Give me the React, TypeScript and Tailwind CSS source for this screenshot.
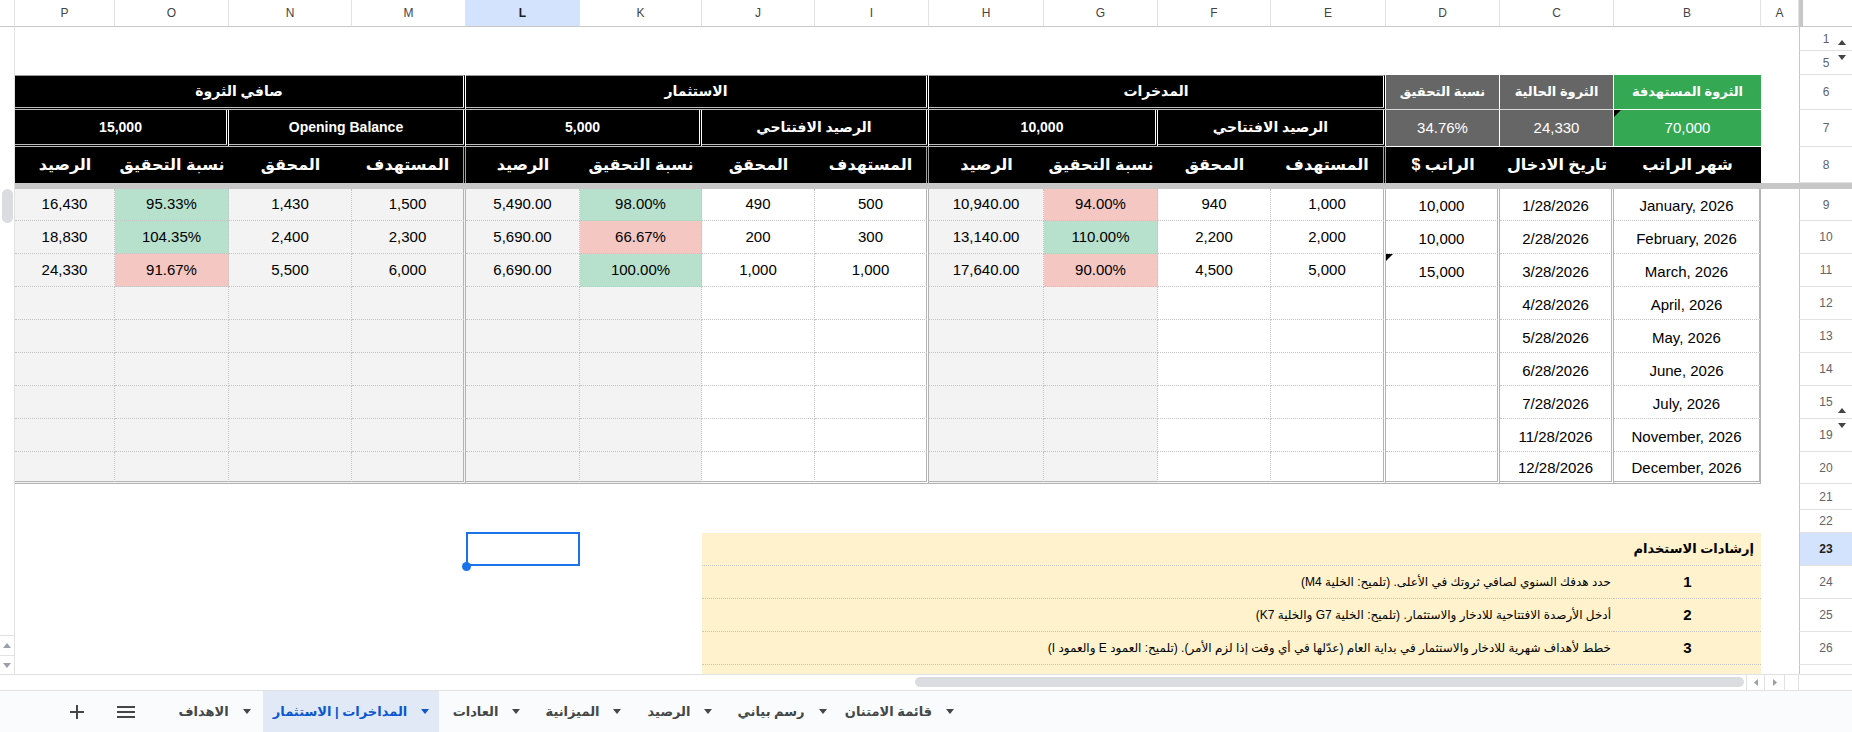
import React from "react";

const COLS =
  "grid grid-cols-[100px_114px_123px_114px_114px_122px_113px_114px_115px_114px_113px_115px_114px_114px_147px_38px_53px]";
const FONT = "[font-family:'Liberation_Sans','DejaVu_Sans',sans-serif]";

const GRAY = "bg-[#f3f3f3]";
const WHITE = "bg-white";
const GREEN = "bg-[#b7e1cd]";
const RED = "bg-[#f4c7c3]";

const dotR = "border-r border-r-[#c4c4c4] [border-right-style:dotted]";
const dblR = "border-r-[3px] border-r-[#b3b3b3] [border-right-style:double]";
const solR = "border-r-2 border-r-[#b3b3b3]";
const dotB = "border-b border-b-[#c4c4c4] [border-bottom-style:dotted]";
const dblB = "border-b-[3px] border-b-[#b3b3b3] [border-bottom-style:double]";

const LETTERS = ["P", "O", "N", "M", "L", "K", "J", "I", "H", "G", "F", "E", "D", "C", "B", "A"];

// P..B in the order they appear on screen
const dataCols = [
  { bg: GRAY, r: dotR },
  { bg: GRAY, r: dotR },
  { bg: GRAY, r: dotR },
  { bg: GRAY, r: dblR },
  { bg: GRAY, r: dotR },
  { bg: GRAY, r: dotR },
  { bg: WHITE, r: dotR },
  { bg: WHITE, r: dblR },
  { bg: GRAY, r: dotR },
  { bg: GRAY, r: dotR },
  { bg: WHITE, r: dotR },
  { bg: WHITE, r: dblR },
  { bg: WHITE, r: dblR },
  { bg: WHITE, r: dblR },
  { bg: WHITE, r: solR },
];

type DataRow = {
  n: string;
  h: string;
  v: string[];
  tint?: Record<number, string>;
  note?: boolean;
  mark?: "up" | "down";
  last?: boolean;
};

const empty = (c: string, b: string) => ["", "", "", "", "", "", "", "", "", "", "", "", "", c, b];

const rows: DataRow[] = [
  {
    n: "9",
    h: "h-[32px]",
    v: ["16,430", "95.33%", "1,430", "1,500", "5,490.00", "98.00%", "490", "500", "10,940.00", "94.00%", "940", "1,000", "10,000", "1/28/2026", "January, 2026"],
    tint: { 1: GREEN, 5: GREEN, 9: RED },
  },
  {
    n: "10",
    h: "h-[33px]",
    v: ["18,830", "104.35%", "2,400", "2,300", "5,690.00", "66.67%", "200", "300", "13,140.00", "110.00%", "2,200", "2,000", "10,000", "2/28/2026", "February, 2026"],
    tint: { 1: GREEN, 5: RED, 9: GREEN },
  },
  {
    n: "11",
    h: "h-[33px]",
    v: ["24,330", "91.67%", "5,500", "6,000", "6,690.00", "100.00%", "1,000", "1,000", "17,640.00", "90.00%", "4,500", "5,000", "15,000", "3/28/2026", "March, 2026"],
    tint: { 1: RED, 5: GREEN, 9: RED },
    note: true,
  },
  { n: "12", h: "h-[33px]", v: empty("4/28/2026", "April, 2026") },
  { n: "13", h: "h-[33px]", v: empty("5/28/2026", "May, 2026") },
  { n: "14", h: "h-[33px]", v: empty("6/28/2026", "June, 2026") },
  { n: "15", h: "h-[33px]", v: empty("7/28/2026", "July, 2026"), mark: "up" },
  { n: "19", h: "h-[33px]", v: empty("11/28/2026", "November, 2026"), mark: "down" },
  { n: "20", h: "h-[32px]", v: empty("12/28/2026", "December, 2026"), last: true },
];

const steps = [
  { n: "1", t: "حدد هدفك السنوي لصافي ثروتك في الأعلى. (تلميح: الخلية M4)" },
  { n: "2", t: "أدخل الأرصدة الافتتاحية للادخار والاستثمار. (تلميح: الخلية G7 والخلية K7)" },
  { n: "3", t: "خطط لأهداف شهرية للادخار والاستثمار في بداية العام (عدّلها في أي وقت إذا لزم الأمر). (تلميح: العمود E والعمود I)" },
];

const tabs = [
  { t: "الاهداف", w: "w-[97px]" },
  { t: "المداخرات | الاستثمار", w: "w-[176px]" },
  { t: "العادات", w: "w-[95px]" },
  { t: "الميزانية", w: "w-[99px]" },
  { t: "الرصيد", w: "w-[94px]" },
  { t: "رسم بياني", w: "w-[110px]" },
  { t: "قائمة الامتنان", w: "w-[125px]" },
];

function Tri({ up, color = "#5f6368" }: { up?: boolean; color?: string }) {
  return (
    <svg width="8" height="5" viewBox="0 0 8 5">
      <path d={up ? "M0 5h8L4 0z" : "M0 0h8L4 5z"} fill={color} />
    </svg>
  );
}

function RowNum({ n, mark, active }: { n: string; mark?: "up" | "down"; active?: boolean }) {
  return (
    <div
      className={`relative flex items-center justify-center border-l border-l-[#c7c7c7] border-b border-b-[#e1e1e1] text-[12px] ${
        active ? "bg-[#d3e3fd] font-bold text-[#1f1f1f]" : "bg-white text-[#5f6368]"
      }`}
    >
      {n}
      {mark === "up" && (
        <span className="absolute right-[6px] bottom-[5px] flex">
          <Tri up color="#444" />
        </span>
      )}
      {mark === "down" && (
        <span className="absolute right-[6px] top-[4px] flex">
          <Tri color="#444" />
        </span>
      )}
    </div>
  );
}

function SheetRow({ row }: { row: DataRow }) {
  return (
    <div className={`${COLS} ${row.h}`}>
      {row.v.map((val, i) => {
        const col = dataCols[i];
        const bg = row.tint?.[i] ?? col.bg;
        return (
          <div
            key={i}
            className={`relative flex items-center justify-center text-[15px] text-black ${bg} ${col.r} ${
              row.last ? dblB : dotB
            } ${i >= 12 ? "pt-[4px]" : ""}`}
          >
            {row.note && i === 12 && (
              <span className="absolute left-0 top-0 border-t-[7px] border-r-[7px] border-t-black border-r-transparent" />
            )}
            {val}
          </div>
        );
      })}
      <div className="bg-white" />
      <RowNum n={row.n} mark={row.mark} />
    </div>
  );
}

const blk = "flex items-center justify-center bg-black text-white font-bold";
const grpR = "border-r-[3px] border-r-white [border-right-style:double]";
const rowB = "border-b-[3px] border-b-[#bdbdbd] [border-bottom-style:double]";

export default function App() {
  return (
    <div className={`flex h-[732px] w-[1852px] flex-col overflow-hidden bg-white ${FONT}`}>
      <div className="flex h-[674px]">
        {/* vertical scrollbar, sits on the left in RTL sheets */}
        <div className="flex w-[15px] shrink-0 flex-col border-r border-r-[#e1e1e1]">
          <div className="h-[27px] border-b border-b-[#c7c7c7]" />
          <div className="h-[162px]" />
          <div className="mx-auto h-[34px] w-[11px] rounded-full bg-[#dadce0]" />
          <div className="flex-1" />
          <div className="flex h-[20px] items-center justify-center border-t border-t-[#e1e1e1]">
            <Tri up color="#9aa0a6" />
          </div>
          <div className="flex h-[19px] items-center justify-center border-t border-t-[#e1e1e1]">
            <Tri color="#9aa0a6" />
          </div>
        </div>

        <div className="flex w-[1837px] flex-col">
          {/* column letters */}
          <div className={`${COLS} h-[27px]`}>
            {LETTERS.map((l) => (
              <div
                key={l}
                className={`flex items-center justify-center border-r border-r-[#e1e1e1] border-b border-b-[#c7c7c7] text-[12px] ${
                  l === "L" ? "bg-[#d3e3fd] font-bold text-[#1f1f1f]" : "text-[#444]"
                }`}
              >
                {l}
              </div>
            ))}
            <div className="border-l-4 border-l-[#c7c7c7] border-b border-b-[#c7c7c7] bg-white" />
          </div>

          {/* rows 1 and 5 */}
          <div className={`${COLS} h-[24px]`}>
            <div className="col-[span_16_/_span_16]" />
            <RowNum n="1" mark="up" />
          </div>
          <div className={`${COLS} h-[24px]`}>
            <div className="col-[span_16_/_span_16]" />
            <RowNum n="5" mark="down" />
          </div>

          {/* row 6 */}
          <div className={`${COLS} h-[35px]`}>
            {["صافي الثروة", "الاستثمار", "المدخرات"].map((t) => (
              <div key={t} dir="rtl" className={`col-span-4 text-[14px] ${blk} ${grpR} ${rowB} border-t border-t-[#9a9a9a]`}>
                {t}
              </div>
            ))}
            <div dir="rtl" className="flex items-center justify-center border-r border-r-white border-b border-b-[#d9d9d9] bg-[#666666] text-[13px] font-bold text-white">
              نسبة التحقيق
            </div>
            <div dir="rtl" className="flex items-center justify-center border-r border-r-white border-b border-b-[#d9d9d9] bg-[#666666] text-[13px] font-bold text-white">
              الثروة الحالية
            </div>
            <div dir="rtl" className="flex items-center justify-center border-b border-b-white bg-[#34a853] text-[13px] font-bold text-white">
              الثروة المستهدفة
            </div>
            <div className="bg-white" />
            <RowNum n="6" />
          </div>

          {/* row 7 */}
          <div className={`${COLS} h-[37px]`}>
            {["15,000", "Opening Balance", "5,000", "الرصيد الافتتاحي", "10,000", "الرصيد الافتتاحي"].map((t, i) => (
              <div key={i} dir="rtl" className={`col-span-2 text-[14px] ${blk} ${grpR} ${rowB}`}>
                {t}
              </div>
            ))}
            <div className="flex items-center justify-center border-r border-r-white border-b border-b-white bg-[#666666] text-[15px] text-white">
              34.76%
            </div>
            <div className="flex items-center justify-center border-r border-r-white border-b border-b-white bg-[#666666] text-[15px] text-white">
              24,330
            </div>
            <div className="relative flex items-center justify-center border-b border-b-white bg-[#34a853] text-[15px] text-white">
              <span className="absolute left-0 top-0 border-t-[7px] border-r-[7px] border-t-black border-r-transparent" />
              70,000
            </div>
            <div className="bg-white" />
            <RowNum n="7" />
          </div>

          {/* row 8 */}
          <div className={`${COLS} h-[36px]`}>
            {["الرصيد", "نسبة التحقيق", "المحقق", "المستهدف", "الرصيد", "نسبة التحقيق", "المحقق", "المستهدف", "الرصيد", "نسبة التحقيق", "المحقق", "المستهدف"].map(
              (t, i) => (
                <div
                  key={i}
                  dir="rtl"
                  className={`text-[16px] ${blk} ${i % 4 === 3 ? "border-r-[3px] border-r-[#a0a0a0] [border-right-style:double]" : ""}`}
                >
                  {t}
                </div>
              )
            )}
            <div dir="rtl" className={`text-[16px] ${blk}`}>
              الراتب $
            </div>
            <div dir="rtl" className={`text-[16px] ${blk}`}>
              تاريخ الادخال
            </div>
            <div dir="rtl" className={`text-[16px] ${blk}`}>
              شهر الراتب
            </div>
            <div className="bg-white" />
            <RowNum n="8" />
          </div>

          {/* frozen rows divider */}
          <div className="h-[6px] bg-[#c7c7c7]" />

          {rows.map((r) => (
            <SheetRow key={r.n} row={r} />
          ))}

          <div className={`${COLS} h-[26px]`}>
            <div className="col-[span_16_/_span_16]" />
            <RowNum n="21" />
          </div>
          <div className={`${COLS} h-[23px]`}>
            <div className="col-[span_16_/_span_16]" />
            <RowNum n="22" />
          </div>

          {/* row 23 with the selected cell */}
          <div className={`${COLS} h-[33px]`}>
            <div className="col-span-4" />
            <div className="relative">
              <div className="absolute inset-0 -top-px border-2 border-[#1a73e8]" />
              <div className="absolute -left-[4px] -bottom-[5px] h-[9px] w-[9px] rounded-full bg-[#1a73e8]" />
            </div>
            <div />
            <div dir="rtl" className={`col-span-9 flex items-center bg-[#fff2cc] pr-[7px] text-[13px] font-bold text-black ${dotB}`}>
              إرشادات الاستخدام
            </div>
            <div />
            <RowNum n="23" active />
          </div>

          {steps.map((s, i) => (
            <div key={s.n} className={`${COLS} h-[33px]`}>
              <div className="col-span-6" />
              <div dir="rtl" className={`col-span-8 flex items-center whitespace-nowrap bg-[#fff2cc] pr-[3px] text-[12px] text-black ${dotB}`}>
                {s.t}
              </div>
              <div className={`flex items-center justify-center bg-[#fff2cc] text-[15px] font-bold text-black ${dotB}`}>{s.n}</div>
              <div />
              <RowNum n={String(24 + i)} />
            </div>
          ))}

          <div className={`${COLS} h-[9px]`}>
            <div className="col-span-6" />
            <div className="col-span-9 bg-[#fff2cc]" />
            <div />
            <div className="border-l border-l-[#c7c7c7]" />
          </div>
        </div>
      </div>

      {/* horizontal scrollbar */}
      <div className="flex h-[16px] border-t border-t-[#e1e1e1] bg-white">
        <div className="w-[915px]" />
        <div className="mt-[2px] h-[10px] w-[829px] rounded-full bg-[#dadce0]" />
        <div className="w-[2px]" />
        <div className="flex w-[18px] items-center justify-center border-l border-l-[#e1e1e1]">
          <svg width="4" height="7" viewBox="0 0 4 7">
            <path d="M4 0v7L0 3.5z" fill="#9aa0a6" />
          </svg>
        </div>
        <div className="flex w-[20px] items-center justify-center border-l border-l-[#e1e1e1]">
          <svg width="4" height="7" viewBox="0 0 4 7">
            <path d="M0 0v7l4-3.5z" fill="#9aa0a6" />
          </svg>
        </div>
        <div className="w-[14px] border-l border-l-[#e1e1e1]" />
        <div className="flex-1 border-l border-l-[#e1e1e1]" />
      </div>

      {/* sheet tabs */}
      <div className="flex h-[42px] items-stretch border-t border-t-[#e1e1e1] bg-[#f9fbfd] pl-[66px]">
        <div className="flex w-[22px] items-center justify-center">
          <svg width="14" height="14" viewBox="0 0 14 14">
            <path d="M7 0v14M0 7h14" stroke="#444746" strokeWidth="2" />
          </svg>
        </div>
        <div className="ml-[29px] flex items-center">
          <svg width="18" height="12" viewBox="0 0 18 12">
            <path d="M0 1h18M0 6h18M0 11h18" stroke="#444746" strokeWidth="2" />
          </svg>
        </div>
        <div className="ml-[31px] flex">
          {tabs.map((tab, i) => (
            <div
              key={tab.t}
              className={`flex items-center justify-center gap-[14px] whitespace-nowrap text-[13px] font-semibold ${tab.w} ${
                i === 1 ? "bg-[#e1e9f7] text-[#0b57d0]" : "text-[#444746]"
              }`}
            >
              <span dir="rtl">{tab.t}</span>
              <Tri color={i === 1 ? "#0b57d0" : "#444746"} />
            </div>
          ))}
        </div>
      </div>
    </div>
  );
}
